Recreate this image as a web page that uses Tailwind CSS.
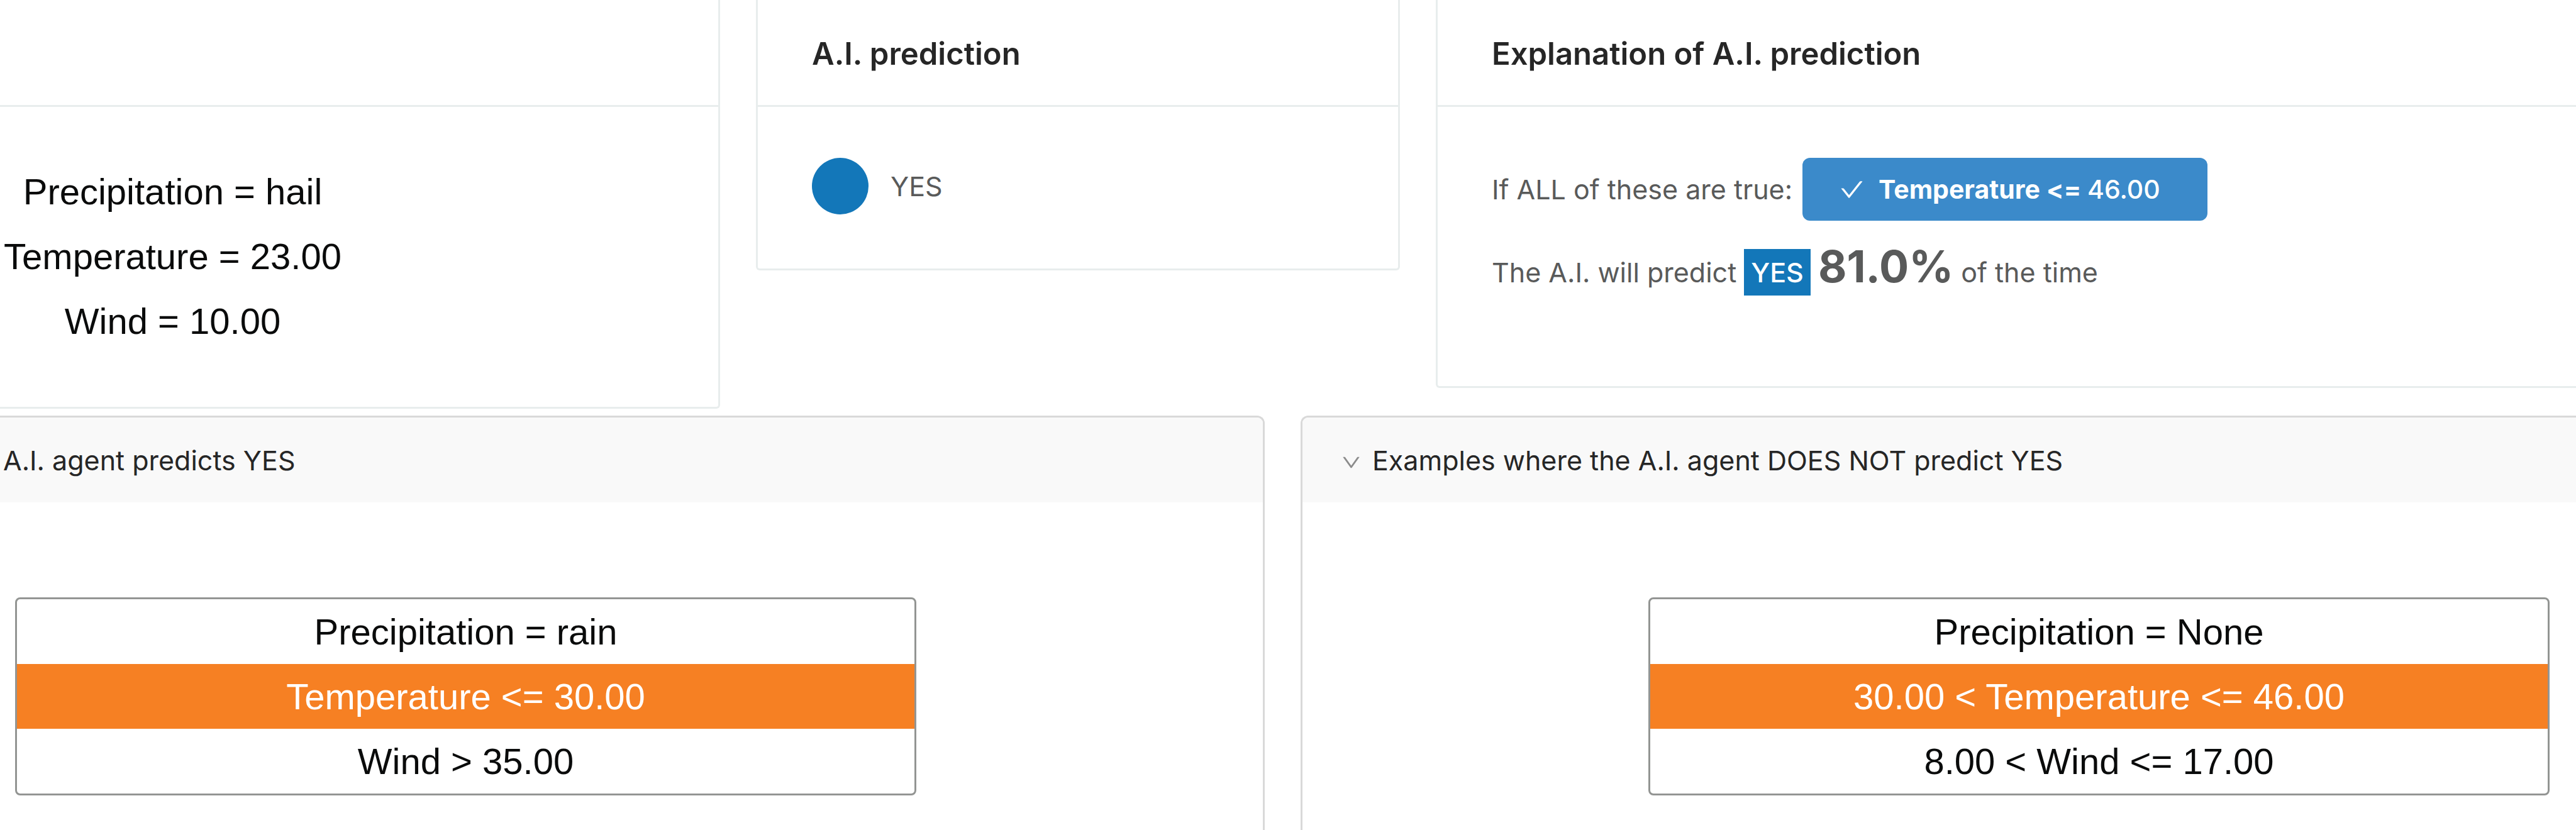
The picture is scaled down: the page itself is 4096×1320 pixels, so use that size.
<!DOCTYPE html>
<html lang="en">
<head>
<meta charset="utf-8">
<title>A.I. prediction</title>
<script src="https://cdn.jsdelivr.net/npm/@tailwindcss/browser@4"></script>
</head>
<body class="bg-white font-['Inter',sans-serif] text-[43px] leading-[74px] text-[#595a5a]">
<main class="flex min-h-screen flex-col overflow-hidden">

  <section class="grid grid-cols-[1145fr_1024fr_1813fr] items-start gap-[57px]">
    <article class="rounded-br-[6px] border-r-3 border-b-3 border-[#e8eded]">
      <header class="h-[170px] border-b-3 border-[#e8eded]"></header>
      <div class="pt-[80px] pb-[82px]">
        <ul class="w-[549px] border-3 border-transparent text-center font-['Liberation_Sans',sans-serif] text-[58px] leading-[103px] whitespace-nowrap text-[#0a0b0b]">
          <li>Precipitation = hail</li>
          <li>Temperature = 23.00</li>
          <li>Wind = 10.00</li>
        </ul>
      </div>
    </article>

    <article class="rounded-b-[6px] border-x-3 border-b-3 border-[#e8eded]">
      <header class="border-b-3 border-[#e8eded] px-[86px] pt-[47px] pb-[42px]">
        <h2 class="text-[49px] leading-[78px] font-semibold text-[#262626]">A.I. prediction</h2>
      </header>
      <div class="flex items-center gap-[35px] px-[86px] pt-[81px] pb-[86px]">
        <span class="size-[90px] rounded-full bg-[#1377b9]"></span>
        <span>YES</span>
      </div>
    </article>

    <article class="rounded-bl-[6px] border-b-3 border-l-3 border-[#e8eded]">
      <header class="border-b-3 border-[#e8eded] px-[86px] pt-[47px] pb-[42px]">
        <h2 class="text-[49px] leading-[78px] font-semibold text-[#262626]">Explanation of A.I. prediction</h2>
      </header>
      <div class="px-[86px] pt-[81px] pb-[144px]">
        <div class="flex items-center gap-[16px]">
          <span>If ALL of these are true:</span>
          <button type="button" class="flex h-[100px] items-center gap-[24px] rounded-[12px] bg-[#3b8aca] pr-[75px] pl-[60px] text-[41px] font-bold text-white">
            <svg class="size-[37px]" viewBox="64 64 896 896" fill="currentColor" aria-hidden="true"><path d="M912 190h-69.900c-9.800 0-19.100 4.500-25.100 12.200L404.700 724.500 207 474a32 32 0 0 0-25.100-12.200H112c-6.700 0-10.400 7.700-6.300 12.900l273.900 347c12.800 16.200 37.400 16.200 50.300 0l488.400-618.900c4.100-5.100.4-12.800-6.300-12.800z"/></svg>
            <span>Temperature &lt;= <span class="font-medium">46.00</span></span>
          </button>
        </div>
        <p class="mt-[36px] flex items-baseline gap-[12px]">
          <span>The A.I. will predict</span>
          <span class="bg-[#1377b9] px-[11px] font-medium text-white">YES</span>
          <strong class="text-[70px] font-bold">81.0%</strong>
          <span>of the time</span>
        </p>
      </div>
    </article>
  </section>

  <section class="mt-[11px] grid flex-1 grid-cols-[2011fr_2028fr] gap-[57px]">
    <article class="rounded-tr-[12px] border-t-3 border-r-3 border-[#d9d9d9]">
      <button type="button" class="flex h-[135px] w-full items-center rounded-tr-[9px] bg-[#f9f9f9] pl-[5px] text-[#262626]">A.I. agent predicts YES</button>
      <div class="flex justify-end pt-[151px] pr-[551px]">
        <ul class="w-[1433px] overflow-hidden rounded-[8px] border-3 border-[#939593] text-center font-['Liberation_Sans',sans-serif] text-[58px] leading-[103px] text-[#0a0b0b]">
          <li>Precipitation = rain</li>
          <li class="bg-[#f68023] text-white">Temperature &lt;= 30.00</li>
          <li>Wind &gt; 35.00</li>
        </ul>
      </div>
    </article>

    <article class="rounded-tl-[12px] border-t-3 border-l-3 border-[#d9d9d9]">
      <button type="button" class="flex h-[135px] w-full items-center gap-[18px] rounded-tl-[9px] bg-[#f9f9f9] pl-[62px] text-[#262626]">
        <svg class="mt-2 size-[31px] text-[#8c8c8c]" viewBox="64 64 896 896" fill="currentColor" aria-hidden="true"><path d="M884 256h-75c-5.100 0-9.900 2.500-12.900 6.600L512 654.200 227.900 262.600c-3-4.100-7.800-6.600-12.900-6.600h-75c-6.500 0-10.300 7.400-6.500 12.700l352.600 486.100c12.800 17.600 39 17.600 51.700 0l352.600-486.100c3.900-5.300.1-12.700-6.400-12.700z"/></svg>
        Examples where the A.I. agent DOES NOT predict YES
      </button>
      <div class="pt-[151px] pl-[550px]">
        <ul class="w-[1433px] overflow-hidden rounded-[8px] border-3 border-[#939593] text-center font-['Liberation_Sans',sans-serif] text-[58px] leading-[103px] text-[#0a0b0b]">
          <li>Precipitation = None</li>
          <li class="bg-[#f68023] text-white">30.00 &lt; Temperature &lt;= 46.00</li>
          <li>8.00 &lt; Wind &lt;= 17.00</li>
        </ul>
      </div>
    </article>
  </section>
</main>
</body>
</html>
